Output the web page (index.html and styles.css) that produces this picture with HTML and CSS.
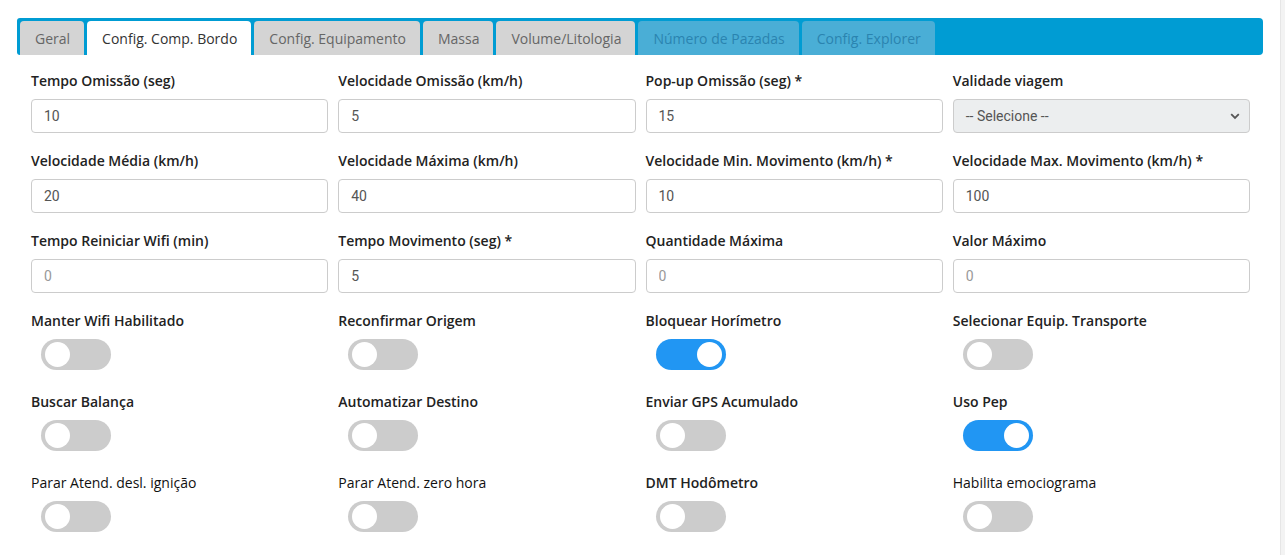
FILE: index.html
```html
<!DOCTYPE html>
<html lang="pt-BR">
<head>
    <meta charset="UTF-8">
    <title>Configurações</title>
    <link rel="stylesheet" href="styles.css">
</head>
<body>
    <div class="page">
        <div class="main">
            <!-- Abas -->
            <div class="tab-bar">
                <a href="#" class="tab">Geral</a>
                <a href="#" class="tab active">Config. Comp. Bordo</a>
                <a href="#" class="tab">Config. Equipamento</a>
                <a href="#" class="tab">Massa</a>
                <a href="#" class="tab">Volume/Litologia</a>
                <a href="#" class="tab disabled">Número de Pazadas</a>
                <a href="#" class="tab disabled">Config. Explorer</a>
            </div>

            <form class="form-grid">
                <div class="field">
                    <label>Tempo Omissão (seg)</label>
                    <input type="text" value="10">
                </div>
                <div class="field">
                    <label>Velocidade Omissão (km/h)</label>
                    <input type="text" value="5">
                </div>
                <div class="field">
                    <label>Pop-up Omissão (seg) *</label>
                    <input type="text" value="15">
                </div>
                <div class="field">
                    <label>Validade viagem</label>
                    <div class="select">
                        <span>-- Selecione --</span>
                        <svg width="10" height="7" viewBox="0 0 10 7"><path d="M1.2 1.2 L5 5 L8.8 1.2" fill="none" stroke="#555" stroke-width="1.8"/></svg>
                    </div>
                </div>

                <div class="field">
                    <label>Velocidade Média (km/h)</label>
                    <input type="text" value="20">
                </div>
                <div class="field">
                    <label>Velocidade Máxima (km/h)</label>
                    <input type="text" value="40">
                </div>
                <div class="field">
                    <label>Velocidade Min. Movimento (km/h) *</label>
                    <input type="text" value="10">
                </div>
                <div class="field">
                    <label>Velocidade Max. Movimento (km/h) *</label>
                    <input type="text" value="100">
                </div>

                <div class="field">
                    <label>Tempo Reiniciar Wifi (min)</label>
                    <input type="text" placeholder="0">
                </div>
                <div class="field">
                    <label>Tempo Movimento (seg) *</label>
                    <input type="text" value="5">
                </div>
                <div class="field">
                    <label>Quantidade Máxima</label>
                    <input type="text" placeholder="0">
                </div>
                <div class="field">
                    <label>Valor Máximo</label>
                    <input type="text" placeholder="0">
                </div>

                <div class="field">
                    <label>Manter Wifi Habilitado</label>
                    <span class="switch"></span>
                </div>
                <div class="field">
                    <label>Reconfirmar Origem</label>
                    <span class="switch"></span>
                </div>
                <div class="field">
                    <label>Bloquear Horímetro</label>
                    <span class="switch on"></span>
                </div>
                <div class="field">
                    <label>Selecionar Equip. Transporte</label>
                    <span class="switch"></span>
                </div>

                <div class="field">
                    <label>Buscar Balança</label>
                    <span class="switch"></span>
                </div>
                <div class="field">
                    <label>Automatizar Destino</label>
                    <span class="switch"></span>
                </div>
                <div class="field">
                    <label>Enviar GPS Acumulado</label>
                    <span class="switch"></span>
                </div>
                <div class="field">
                    <label>Uso Pep</label>
                    <span class="switch on"></span>
                </div>

                <div class="field">
                    <label class="light">Parar Atend. desl. ignição</label>
                    <span class="switch"></span>
                </div>
                <div class="field">
                    <label class="light">Parar Atend. zero hora</label>
                    <span class="switch"></span>
                </div>
                <div class="field">
                    <label>DMT Hodômetro</label>
                    <span class="switch"></span>
                </div>
                <div class="field">
                    <label class="light">Habilita emociograma</label>
                    <span class="switch"></span>
                </div>
            </form>
        </div>
        <div class="scroll-strip"></div>
    </div>
</body>
</html>
```

FILE: styles.css
```css
body {
    margin: 0;
    padding: 0;
    background: #fff;
    font-family: "Open Sans", Arial, sans-serif;
    overflow: hidden;
}

.page {
    display: flex;
    height: 555px;
}

.main {
    flex: 1;
    padding: 18px 17px 0 17px;
}

.scroll-strip {
    width: 4px;
    background: #f3f3f3;
    border-left: 1px solid #e6e6e6;
}

/* Tabs */
.tab-bar {
    display: flex;
    gap: 3px;
    height: 37px;
    padding: 3px 3px 0 3px;
    box-sizing: border-box;
    background: #009cd3;
    border-radius: 3px 4px 4px 3px;
}

.tab {
    display: flex;
    align-items: center;
    padding: 0 14px 0 15px;
    height: 34px;
    background: #d4d4d4;
    color: #666;
    font-size: 14px;
    text-decoration: none;
    border-radius: 4px 4px 0 0;
}

.tab.active {
    background: #fff;
    color: #333;
}

.tab.disabled {
    background: #4aaed6;
    color: #2a84b0;
}

/* Form */
.form-grid {
    display: grid;
    grid-template-columns: repeat(4, 1fr);
    column-gap: 10px;
    row-gap: 18px;
    padding: 16px 13px 0 14px;
}

.field label {
    display: block;
    height: 20px;
    line-height: 20px;
    margin-bottom: 8px;
    font-size: 14px;
    font-weight: 600;
    color: #222;
    white-space: nowrap;
}

.field label.light {
    font-weight: 500;
    color: #111;
}

.field input {
    display: block;
    width: 100%;
    height: 34px;
    box-sizing: border-box;
    padding: 0 12px;
    border: 1px solid #ccc;
    border-radius: 4px;
    font-family: Roboto, Arial, sans-serif;
    font-size: 14px;
    color: #555;
    outline: none;
}

.field input::placeholder {
    color: #999;
}

.select {
    display: flex;
    align-items: center;
    justify-content: space-between;
    height: 34px;
    box-sizing: border-box;
    padding: 0 9px 0 12px;
    border: 1px solid #ccc;
    border-radius: 4px;
    background: #eceeef;
    font-family: Roboto, Arial, sans-serif;
    font-size: 14px;
    color: #555;
}

/* Toggle */
.switch {
    display: block;
    position: relative;
    width: 70px;
    height: 31px;
    margin: 0 0 4px 10px;
    background: #ccc;
    border-radius: 16px;
}

.switch::before {
    content: "";
    position: absolute;
    top: 3px;
    left: 4px;
    width: 25px;
    height: 25px;
    background: #fff;
    border-radius: 50%;
}

.switch.on {
    background: #2196f3;
}

.switch.on::before {
    left: 41px;
}
```
